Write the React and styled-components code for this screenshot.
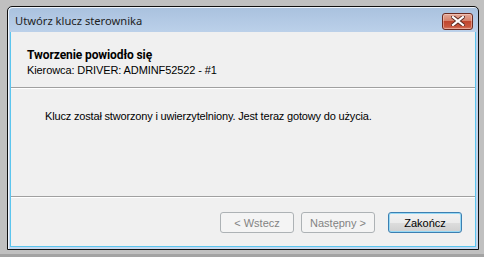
import React from "react";
import styled, { createGlobalStyle, css } from "styled-components";

const Global = createGlobalStyle`
  html, body {
    margin: 0;
    padding: 0;
    background: #bfbfbf;
  }
`;

const Screen = styled.div`
  width: 484px;
  height: 257px;
  box-sizing: border-box;
  padding: 6px 6px 0 7px;
  background: #c0c0c0;
  border-bottom: 3px solid #a3a3a3;
`;

const Window = styled.div`
  width: 472px;
  height: 244px;
  box-sizing: border-box;
  border: 1px solid #101010;
  border-radius: 5px 5px 0 0;
  background: linear-gradient(#a9c1de 0px, #bcd1ea 26px, #c3d7ee 100%);
  box-shadow: inset 1px 1px 0 #eef4fb;
  padding: 0 2px 2px 2px;
  display: flex;
  flex-direction: column;
`;

const TitleBar = styled.div`
  height: 25px;
  display: flex;
  align-items: center;
  justify-content: space-between;
  padding: 0 3px 0 5px;
`;

const Title = styled.div`
  font-family: "Noto Sans", "Open Sans", sans-serif;
  font-size: 11.2px;
  color: #1e1e1e;
  margin-top: 1px;
`;

const CloseButton = styled.div`
  width: 31px;
  height: 17px;
  box-sizing: border-box;
  border: 1px solid #6b2a20;
  border-radius: 3px;
  background: linear-gradient(#e3a998 0%, #d7826c 45%, #c0462e 50%, #c9583f 85%, #d7826c 100%);
  box-shadow: inset 0 0 0 1px rgba(255, 220, 210, 0.45);
  display: flex;
  align-items: center;
  justify-content: center;
  margin-top: 3px;
`;

const Client = styled.div`
  flex: 1;
  background: #f0f0f0;
  border: 1px solid #5bc5ee;
  border-top: none;
  display: flex;
  flex-direction: column;
  font-family: "Liberation Sans", Arial, sans-serif;
  font-size: 11px;
  color: #000;
`;

const Header = styled.div`
  height: 55px;
  box-sizing: border-box;
  padding: 16px 0 0 16px;
  display: flex;
  flex-direction: column;
  gap: 2px;
`;

const HeaderTitle = styled.div`
  font-family: Roboto, "Liberation Sans", sans-serif;
  font-weight: bold;
  font-size: 12px;
  letter-spacing: -0.1px;
`;

const HeaderInfo = styled.div`
  letter-spacing: -0.1px;
`;

const Divider = styled.div`
  height: 1px;
  background: #a0a0a0;
  border-bottom: 1px solid #ffffff;
`;

const Body = styled.div`
  flex: 1;
  padding: 21px 0 0 34px;
  letter-spacing: -0.17px;
`;

const Footer = styled.div`
  height: 48px;
  box-sizing: border-box;
  display: flex;
  justify-content: flex-end;
  padding: 14px 13px 0 0;
`;

const Button = styled.div`
  width: 74px;
  height: 21px;
  box-sizing: border-box;
  border-radius: 3px;
  display: flex;
  align-items: center;
  justify-content: center;
  margin-left: ${(p) => p.gap || 0}px;
  border: 1px solid #adb2b5;
  background: #f4f4f4;
  color: #838383;
  ${(p) =>
    p.primary &&
    css`
      border-color: #3c7fb1;
      color: #000;
      background: linear-gradient(#f2f2f2 0%, #ebebeb 50%, #dddddd 51%, #cfcfcf 100%);
      box-shadow: inset 0 0 0 1px #97d9f5;
    `}
`;

function CloseIcon() {
  return (
    <svg width="14" height="10" viewBox="0 0 14 10">
      <path
        d="M2 1 L12 9 M12 1 L2 9"
        stroke="#5a2a22"
        strokeWidth="4"
        strokeLinecap="square"
      />
      <path
        d="M2 1 L12 9 M12 1 L2 9"
        stroke="#ffffff"
        strokeWidth="2.2"
        strokeLinecap="square"
      />
    </svg>
  );
}

export default function App() {
  return (
    <>
      <Global />
      <Screen>
        <Window>
          <TitleBar>
            <Title>Utwórz klucz sterownika</Title>
            <CloseButton>
              <CloseIcon />
            </CloseButton>
          </TitleBar>
          <Client>
            <Header>
              <HeaderTitle>Tworzenie powiodło się</HeaderTitle>
              <HeaderInfo>Kierowca: DRIVER: ADMINF52522 - #1</HeaderInfo>
            </Header>
            <Divider />
            <Body>
              Klucz został stworzony i uwierzytelniony. Jest teraz gotowy do użycia.
            </Body>
            <Divider />
            <Footer>
              <Button>&lt; Wstecz</Button>
              <Button gap={7}>Następny &gt;</Button>
              <Button gap={13} primary>
                Zakończ
              </Button>
            </Footer>
          </Client>
        </Window>
      </Screen>
    </>
  );
}
